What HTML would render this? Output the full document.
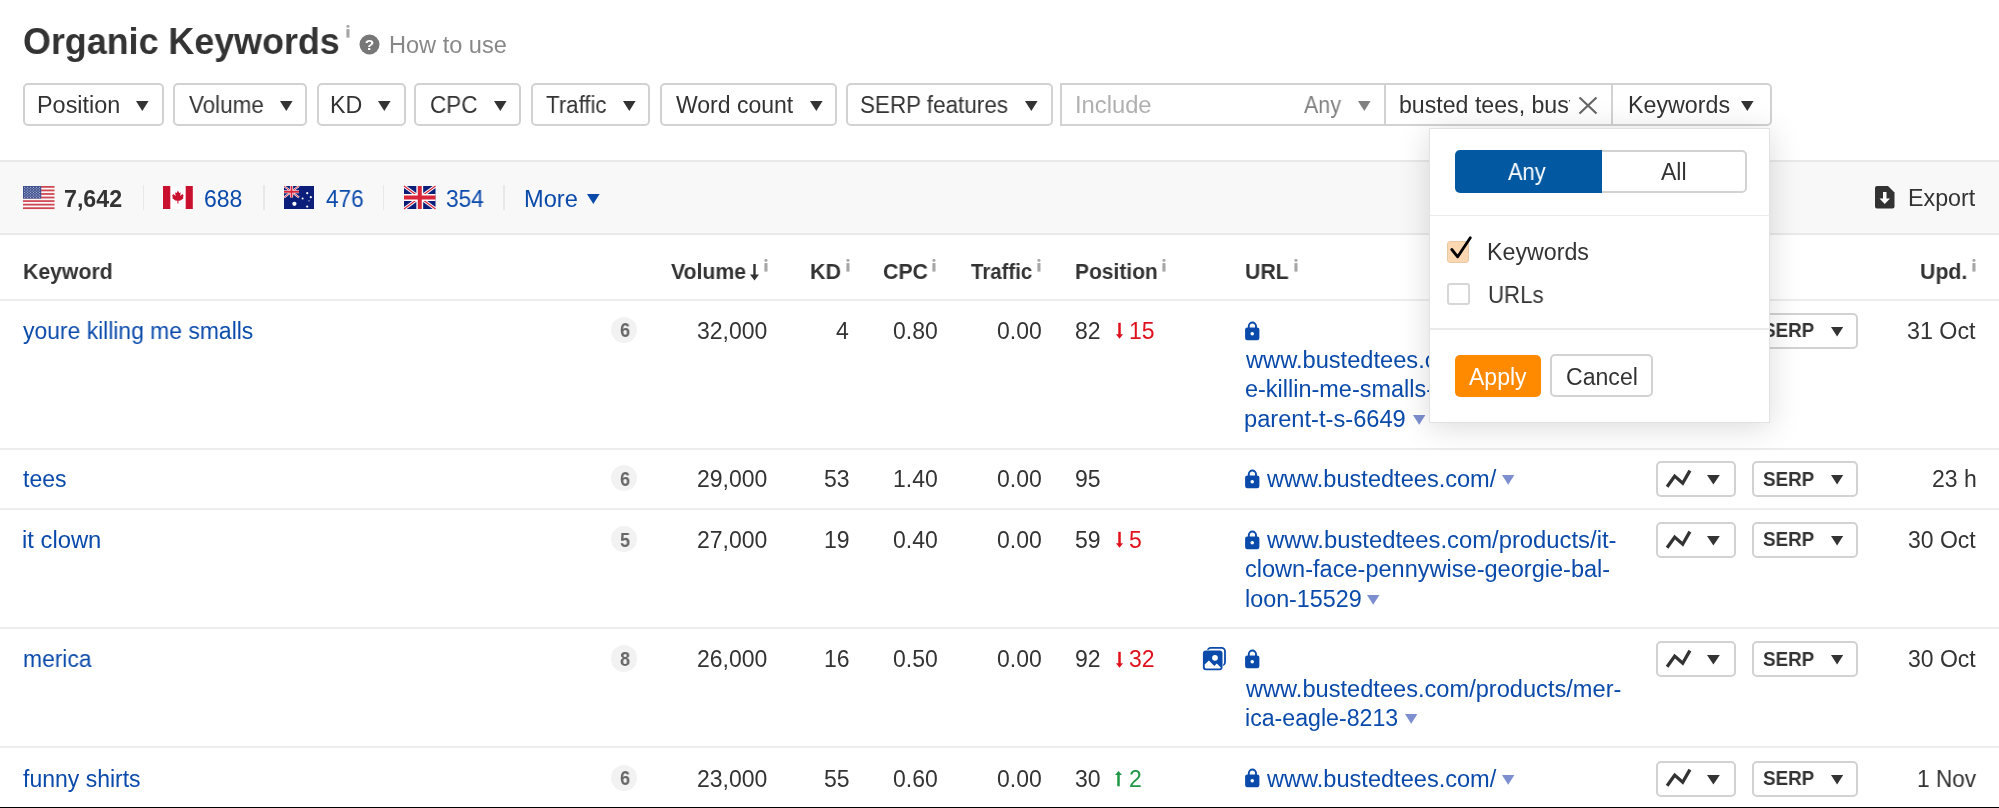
<!DOCTYPE html>
<html><head><meta charset="utf-8"><style>
html,body{margin:0;padding:0;background:#fff;width:1999px;height:808px;overflow:hidden;position:relative;}
.t{position:absolute;white-space:nowrap;font-family:'Liberation Sans', sans-serif;will-change:transform;}
svg{overflow:visible;will-change:transform}
</style></head><body>
<div class="t" style="top:24.29px;font-size:36.5px;line-height:36.5px;color:#333333;font-weight:700;left:23.02px;transform:scaleX(0.9819);transform-origin:0 0;">Organic Keywords</div>
<svg style="position:absolute;left:346.2px;top:24.6px" width="4" height="13" viewBox="0 0 4 13"><rect x="0.4" y="0" width="3.1" height="2.8" rx="1.3" fill="#a6a6a6"/><rect x="0.4" y="4.1" width="3.1" height="8.5" fill="#a6a6a6"/></svg>
<svg style="position:absolute;left:359px;top:33.6px" width="21" height="21" viewBox="0 0 21 21"><circle cx="10.5" cy="10.5" r="10" fill="#777"/><text x="10.5" y="15.6" text-anchor="middle" font-family="Liberation Sans" font-weight="700" font-size="15.5" fill="#fff">?</text></svg>
<div class="t" style="top:33.50px;font-size:23px;line-height:23px;color:#888888;left:388.95px;transform:scaleX(1.0241);transform-origin:0 0;">How to use</div>
<div style="position:absolute;left:23px;top:83px;width:141px;height:43px;box-sizing:border-box;border:2px solid #d2d2d2;border-radius:5px;background:#fff;"></div>
<div class="t" style="top:94.10px;font-size:23px;line-height:23px;color:#333333;left:36.56px;transform:scaleX(1.0177);transform-origin:0 0;">Position</div>
<svg style="position:absolute;left:135.9px;top:101px" width="12.6" height="10" viewBox="0 0 12.6 10"><path d="M0 0H12.6L6.3 10Z" fill="#333333"/></svg>
<div style="position:absolute;left:173px;top:83px;width:134px;height:43px;box-sizing:border-box;border:2px solid #d2d2d2;border-radius:5px;background:#fff;"></div>
<div class="t" style="top:94.10px;font-size:23px;line-height:23px;color:#333333;left:188.60px;transform:scaleX(0.9750);transform-origin:0 0;">Volume</div>
<svg style="position:absolute;left:279.9px;top:101px" width="12.6" height="10" viewBox="0 0 12.6 10"><path d="M0 0H12.6L6.3 10Z" fill="#333333"/></svg>
<div style="position:absolute;left:317px;top:83px;width:89px;height:43px;box-sizing:border-box;border:2px solid #d2d2d2;border-radius:5px;background:#fff;"></div>
<div class="t" style="top:94.10px;font-size:23px;line-height:23px;color:#333333;left:330.08px;transform:scaleX(1.0103);transform-origin:0 0;">KD</div>
<svg style="position:absolute;left:378px;top:101px" width="12.6" height="10" viewBox="0 0 12.6 10"><path d="M0 0H12.6L6.3 10Z" fill="#333333"/></svg>
<div style="position:absolute;left:414px;top:83px;width:107px;height:43px;box-sizing:border-box;border:2px solid #d2d2d2;border-radius:5px;background:#fff;"></div>
<div class="t" style="top:94.10px;font-size:23px;line-height:23px;color:#333333;left:429.52px;transform:scaleX(0.9787);transform-origin:0 0;">CPC</div>
<svg style="position:absolute;left:494px;top:101px" width="12.6" height="10" viewBox="0 0 12.6 10"><path d="M0 0H12.6L6.3 10Z" fill="#333333"/></svg>
<div style="position:absolute;left:531px;top:83px;width:119px;height:43px;box-sizing:border-box;border:2px solid #d2d2d2;border-radius:5px;background:#fff;"></div>
<div class="t" style="top:94.10px;font-size:23px;line-height:23px;color:#333333;left:546.10px;transform:scaleX(0.9677);transform-origin:0 0;">Traffic</div>
<svg style="position:absolute;left:623px;top:101px" width="12.6" height="10" viewBox="0 0 12.6 10"><path d="M0 0H12.6L6.3 10Z" fill="#333333"/></svg>
<div style="position:absolute;left:660px;top:83px;width:177px;height:43px;box-sizing:border-box;border:2px solid #d2d2d2;border-radius:5px;background:#fff;"></div>
<div class="t" style="top:94.10px;font-size:23px;line-height:23px;color:#333333;left:675.50px;">Word count</div>
<svg style="position:absolute;left:810px;top:101px" width="12.6" height="10" viewBox="0 0 12.6 10"><path d="M0 0H12.6L6.3 10Z" fill="#333333"/></svg>
<div style="position:absolute;left:846px;top:83px;width:207px;height:43px;box-sizing:border-box;border:2px solid #d2d2d2;border-radius:5px;background:#fff;"></div>
<div class="t" style="top:94.10px;font-size:23px;line-height:23px;color:#333333;left:860.22px;transform:scaleX(0.9753);transform-origin:0 0;">SERP features</div>
<svg style="position:absolute;left:1025px;top:101px" width="12.6" height="10" viewBox="0 0 12.6 10"><path d="M0 0H12.6L6.3 10Z" fill="#333333"/></svg>
<div style="position:absolute;left:1060px;top:83px;width:712px;height:43px;box-sizing:border-box;border:2px solid #d2d2d2;border-radius:5px;background:#fff;border-radius:0 5px 5px 0;"></div>
<div style="position:absolute;left:1384px;top:84px;width:2px;height:41px;background:#d2d2d2;"></div>
<div style="position:absolute;left:1611px;top:84px;width:2px;height:41px;background:#d2d2d2;"></div>
<div class="t" style="top:94.10px;font-size:23px;line-height:23px;color:#b0b0b0;left:1074.84px;transform:scaleX(1.0324);transform-origin:0 0;">Include</div>
<div class="t" style="top:94.10px;font-size:23px;line-height:23px;color:#808080;left:1303.80px;transform:scaleX(0.9325);transform-origin:0 0;">Any</div>
<svg style="position:absolute;left:1358.4px;top:101px" width="12.6" height="10" viewBox="0 0 12.6 10"><path d="M0 0H12.6L6.3 10Z" fill="#808080"/></svg>
<div style="position:absolute;left:1390px;top:90px;width:179.5px;height:32px;overflow:hidden;"><div class="t" style="left:8.6px;top:4.10px;font-size:23px;line-height:23px;color:#333333;transform:scaleX(1.006);transform-origin:0 0">busted tees, busted</div></div>
<svg style="position:absolute;left:1578px;top:96px" width="20" height="19" viewBox="0 0 20 19"><path d="M1.5 1.5L18.5 17.5M18.5 1.5L1.5 17.5" stroke="#666" stroke-width="2.2" fill="none"/></svg>
<div class="t" style="top:94.10px;font-size:23px;line-height:23px;color:#333333;left:1627.98px;transform:scaleX(1.0101);transform-origin:0 0;">Keywords</div>
<svg style="position:absolute;left:1741px;top:101px" width="12.6" height="10" viewBox="0 0 12.6 10"><path d="M0 0H12.6L6.3 10Z" fill="#333333"/></svg>
<div style="position:absolute;left:0px;top:160px;width:1999px;height:75px;background:#f8f8f8;"></div>
<div style="position:absolute;left:0px;top:160px;width:1999px;height:2px;background:#e9e9eb;"></div>
<div style="position:absolute;left:0px;top:233.4px;width:1999px;height:2.0px;background:#e9e9eb;"></div>
<svg style="position:absolute;left:22.6px;top:186.2px" width="32" height="23" viewBox="0 0 32 23"><rect x="0" y="0.00" width="31.5" height="1.75" fill="#d0454f"/><rect x="0" y="3.55" width="31.5" height="1.75" fill="#d0454f"/><rect x="0" y="7.10" width="31.5" height="1.75" fill="#d0454f"/><rect x="0" y="10.65" width="31.5" height="1.75" fill="#d0454f"/><rect x="0" y="14.20" width="31.5" height="1.75" fill="#d0454f"/><rect x="0" y="17.75" width="31.5" height="1.75" fill="#d0454f"/><rect x="0" y="21.30" width="31.5" height="1.75" fill="#d0454f"/><rect x="0" y="0" width="18.2" height="12.6" fill="#3d4f8c"/><circle cx="1.6" cy="1.4" r="0.6" fill="#a9b2d3"/><circle cx="4.6" cy="1.4" r="0.6" fill="#a9b2d3"/><circle cx="7.6" cy="1.4" r="0.6" fill="#a9b2d3"/><circle cx="10.6" cy="1.4" r="0.6" fill="#a9b2d3"/><circle cx="13.6" cy="1.4" r="0.6" fill="#a9b2d3"/><circle cx="16.6" cy="1.4" r="0.6" fill="#a9b2d3"/><circle cx="1.6" cy="3.9" r="0.6" fill="#a9b2d3"/><circle cx="4.6" cy="3.9" r="0.6" fill="#a9b2d3"/><circle cx="7.6" cy="3.9" r="0.6" fill="#a9b2d3"/><circle cx="10.6" cy="3.9" r="0.6" fill="#a9b2d3"/><circle cx="13.6" cy="3.9" r="0.6" fill="#a9b2d3"/><circle cx="16.6" cy="3.9" r="0.6" fill="#a9b2d3"/><circle cx="1.6" cy="6.4" r="0.6" fill="#a9b2d3"/><circle cx="4.6" cy="6.4" r="0.6" fill="#a9b2d3"/><circle cx="7.6" cy="6.4" r="0.6" fill="#a9b2d3"/><circle cx="10.6" cy="6.4" r="0.6" fill="#a9b2d3"/><circle cx="13.6" cy="6.4" r="0.6" fill="#a9b2d3"/><circle cx="16.6" cy="6.4" r="0.6" fill="#a9b2d3"/><circle cx="1.6" cy="8.9" r="0.6" fill="#a9b2d3"/><circle cx="4.6" cy="8.9" r="0.6" fill="#a9b2d3"/><circle cx="7.6" cy="8.9" r="0.6" fill="#a9b2d3"/><circle cx="10.6" cy="8.9" r="0.6" fill="#a9b2d3"/><circle cx="13.6" cy="8.9" r="0.6" fill="#a9b2d3"/><circle cx="16.6" cy="8.9" r="0.6" fill="#a9b2d3"/><circle cx="1.6" cy="11.4" r="0.6" fill="#a9b2d3"/><circle cx="4.6" cy="11.4" r="0.6" fill="#a9b2d3"/><circle cx="7.6" cy="11.4" r="0.6" fill="#a9b2d3"/><circle cx="10.6" cy="11.4" r="0.6" fill="#a9b2d3"/><circle cx="13.6" cy="11.4" r="0.6" fill="#a9b2d3"/><circle cx="16.6" cy="11.4" r="0.6" fill="#a9b2d3"/><circle cx="3.1" cy="2.6" r="0.6" fill="#a9b2d3"/><circle cx="6.1" cy="2.6" r="0.6" fill="#a9b2d3"/><circle cx="9.1" cy="2.6" r="0.6" fill="#a9b2d3"/><circle cx="12.1" cy="2.6" r="0.6" fill="#a9b2d3"/><circle cx="15.1" cy="2.6" r="0.6" fill="#a9b2d3"/><circle cx="3.1" cy="5.2" r="0.6" fill="#a9b2d3"/><circle cx="6.1" cy="5.2" r="0.6" fill="#a9b2d3"/><circle cx="9.1" cy="5.2" r="0.6" fill="#a9b2d3"/><circle cx="12.1" cy="5.2" r="0.6" fill="#a9b2d3"/><circle cx="15.1" cy="5.2" r="0.6" fill="#a9b2d3"/><circle cx="3.1" cy="7.7" r="0.6" fill="#a9b2d3"/><circle cx="6.1" cy="7.7" r="0.6" fill="#a9b2d3"/><circle cx="9.1" cy="7.7" r="0.6" fill="#a9b2d3"/><circle cx="12.1" cy="7.7" r="0.6" fill="#a9b2d3"/><circle cx="15.1" cy="7.7" r="0.6" fill="#a9b2d3"/><circle cx="3.1" cy="10.2" r="0.6" fill="#a9b2d3"/><circle cx="6.1" cy="10.2" r="0.6" fill="#a9b2d3"/><circle cx="9.1" cy="10.2" r="0.6" fill="#a9b2d3"/><circle cx="12.1" cy="10.2" r="0.6" fill="#a9b2d3"/><circle cx="15.1" cy="10.2" r="0.6" fill="#a9b2d3"/></svg>
<div class="t" style="top:187.50px;font-size:23px;line-height:23px;color:#333333;font-weight:700;left:64.39px;transform:scaleX(1.0089);transform-origin:0 0;">7,642</div>
<div style="position:absolute;left:142.75px;top:185px;width:1.5px;height:25px;background:#e9e9eb;"></div>
<svg style="position:absolute;left:163px;top:186.1px" width="30" height="23" viewBox="0 0 30 23"><rect width="29.8" height="23" fill="#fff"/><rect x="0" width="7.3" height="23" fill="#c9102f"/><rect x="22.7" width="7.1" height="23" fill="#c9102f"/><path d="M14.90 4.40L16.20 7.00L17.70 6.40L17.20 10.00L19.50 8.00L20.60 9.40L19.90 11.60L20.70 12.10L17.50 14.60L15.40 14.80L15.40 17.40L14.40 17.40L14.40 14.80L12.30 14.60L9.10 12.10L9.90 11.60L9.20 9.40L10.30 8.00L12.60 10.00L12.10 6.40L13.60 7.00Z" fill="#c9102f"/></svg>
<div class="t" style="top:187.50px;font-size:23px;line-height:23px;color:#0a4aab;left:204.31px;transform:scaleX(0.9892);transform-origin:0 0;">688</div>
<div style="position:absolute;left:263.15px;top:185px;width:1.5px;height:25px;background:#e9e9eb;"></div>
<svg style="position:absolute;left:284.2px;top:186.2px" width="30" height="23" viewBox="0 0 30 23"><rect width="30" height="23" fill="#0b1f7a"/><g><path d="M0 0L15 11.5M15 0L0 11.5" stroke="#fff" stroke-width="2.2"/><path d="M0 0L15 11.5M15 0L0 11.5" stroke="#d8253a" stroke-width="0.9"/><path d="M7.5 0V11.5M0 5.75H15" stroke="#fff" stroke-width="3.2"/><path d="M7.5 0V11.5M0 5.75H15" stroke="#d8253a" stroke-width="1.8"/></g><circle cx="10.4" cy="17.8" r="2.1" fill="#fff"/><circle cx="23.2" cy="7.2" r="1.1" fill="#fff"/><circle cx="26.8" cy="11.2" r="1.1" fill="#fff"/><circle cx="18.6" cy="12.4" r="1.0" fill="#fff"/><circle cx="23.2" cy="20.6" r="1.1" fill="#fff"/><circle cx="25" cy="14.8" r="0.6" fill="#fff"/></svg>
<div class="t" style="top:187.50px;font-size:23px;line-height:23px;color:#0a4aab;left:325.90px;transform:scaleX(0.9842);transform-origin:0 0;">476</div>
<div style="position:absolute;left:382.55px;top:185px;width:1.5px;height:25px;background:#e9e9eb;"></div>
<svg style="position:absolute;left:403.6px;top:186.2px" width="32" height="23" viewBox="0 0 32 23"><rect width="31.5" height="23" fill="#0b1f7a"/><path d="M0 0L31.5 23M31.5 0L0 23" stroke="#fff" stroke-width="3.4"/><path d="M0 0L31.5 23M31.5 0L0 23" stroke="#d8253a" stroke-width="1.2"/><path d="M15.75 0V23M0 11.5H31.5" stroke="#fff" stroke-width="6.8"/><path d="M15.75 0V23M0 11.5H31.5" stroke="#d8253a" stroke-width="4"/></svg>
<div class="t" style="top:187.50px;font-size:23px;line-height:23px;color:#0a4aab;left:446.11px;transform:scaleX(0.9865);transform-origin:0 0;">354</div>
<div style="position:absolute;left:503.15px;top:185px;width:1.5px;height:25px;background:#e9e9eb;"></div>
<div class="t" style="top:187.50px;font-size:23px;line-height:23px;color:#0a4aab;left:524.25px;transform:scaleX(1.0260);transform-origin:0 0;">More</div>
<svg style="position:absolute;left:586.8px;top:193.6px" width="12.6" height="10" viewBox="0 0 12.6 10"><path d="M0 0H12.6L6.3 10Z" fill="#0a4aab"/></svg>
<svg style="position:absolute;left:1875px;top:186.4px" width="20" height="23" viewBox="0 0 20 23"><path d="M2 0H13L19.5 6.5V20.5A2 2 0 0 1 17.5 22.5H2A2 2 0 0 1 0 20.5V2A2 2 0 0 1 2 0Z" fill="#333"/><path d="M8 6H11.5V12.5H15L9.75 18L4.5 12.5H8Z" fill="#fff"/></svg>
<div class="t" style="top:187.10px;font-size:23px;line-height:23px;color:#333333;left:1907.98px;transform:scaleX(1.0108);transform-origin:0 0;">Export</div>
<div class="t" style="top:261.33px;font-size:22px;line-height:22px;color:#333333;font-weight:700;left:22.84px;transform:scaleX(0.9648);transform-origin:0 0;">Keyword</div>
<div class="t" style="top:261.33px;font-size:22px;line-height:22px;color:#333333;font-weight:700;left:670.50px;transform:scaleX(0.9649);transform-origin:0 0;">Volume</div>
<svg style="position:absolute;left:750px;top:263.5px" width="9" height="17" viewBox="0 0 9 17"><path d="M4.5 0V12" stroke="#333" stroke-width="2.4"/><path d="M0 10.5H9L4.5 16.5Z" fill="#333"/></svg>
<svg style="position:absolute;left:764px;top:259.4px" width="4" height="13" viewBox="0 0 4 13"><rect x="0.4" y="0" width="3.1" height="2.8" rx="1.3" fill="#a6a6a6"/><rect x="0.4" y="4.1" width="3.1" height="8.5" fill="#a6a6a6"/></svg>
<div class="t" style="top:261.33px;font-size:22px;line-height:22px;color:#333333;font-weight:700;left:809.83px;transform:scaleX(0.9733);transform-origin:0 0;">KD</div>
<svg style="position:absolute;left:845.9px;top:259.4px" width="4" height="13" viewBox="0 0 4 13"><rect x="0.4" y="0" width="3.1" height="2.8" rx="1.3" fill="#a6a6a6"/><rect x="0.4" y="4.1" width="3.1" height="8.5" fill="#a6a6a6"/></svg>
<div class="t" style="top:261.33px;font-size:22px;line-height:22px;color:#333333;font-weight:700;left:882.63px;transform:scaleX(0.9667);transform-origin:0 0;">CPC</div>
<svg style="position:absolute;left:932px;top:259.4px" width="4" height="13" viewBox="0 0 4 13"><rect x="0.4" y="0" width="3.1" height="2.8" rx="1.3" fill="#a6a6a6"/><rect x="0.4" y="4.1" width="3.1" height="8.5" fill="#a6a6a6"/></svg>
<div class="t" style="top:261.33px;font-size:22px;line-height:22px;color:#333333;font-weight:700;left:970.90px;transform:scaleX(0.9273);transform-origin:0 0;">Traffic</div>
<svg style="position:absolute;left:1037.1px;top:259.4px" width="4" height="13" viewBox="0 0 4 13"><rect x="0.4" y="0" width="3.1" height="2.8" rx="1.3" fill="#a6a6a6"/><rect x="0.4" y="4.1" width="3.1" height="8.5" fill="#a6a6a6"/></svg>
<div class="t" style="top:261.33px;font-size:22px;line-height:22px;color:#333333;font-weight:700;left:1074.95px;transform:scaleX(0.9541);transform-origin:0 0;">Position</div>
<svg style="position:absolute;left:1161.5px;top:259.4px" width="4" height="13" viewBox="0 0 4 13"><rect x="0.4" y="0" width="3.1" height="2.8" rx="1.3" fill="#a6a6a6"/><rect x="0.4" y="4.1" width="3.1" height="8.5" fill="#a6a6a6"/></svg>
<div class="t" style="top:261.33px;font-size:22px;line-height:22px;color:#333333;font-weight:700;left:1244.83px;transform:scaleX(0.9659);transform-origin:0 0;">URL</div>
<svg style="position:absolute;left:1293.7px;top:259.4px" width="4" height="13" viewBox="0 0 4 13"><rect x="0.4" y="0" width="3.1" height="2.8" rx="1.3" fill="#a6a6a6"/><rect x="0.4" y="4.1" width="3.1" height="8.5" fill="#a6a6a6"/></svg>
<div class="t" style="top:261.33px;font-size:22px;line-height:22px;color:#333333;font-weight:700;left:1919.53px;transform:scaleX(0.9681);transform-origin:0 0;">Upd.</div>
<svg style="position:absolute;left:1972px;top:259.4px" width="4" height="13" viewBox="0 0 4 13"><rect x="0.4" y="0" width="3.1" height="2.8" rx="1.3" fill="#a6a6a6"/><rect x="0.4" y="4.1" width="3.1" height="8.5" fill="#a6a6a6"/></svg>
<div style="position:absolute;left:0px;top:298.9px;width:1999px;height:2.0px;background:#ececee;"></div>
<div style="position:absolute;left:0px;top:447.5px;width:1999px;height:2.0px;background:#ececee;"></div>
<div style="position:absolute;left:0px;top:508.2px;width:1999px;height:2.0px;background:#ececee;"></div>
<div style="position:absolute;left:0px;top:627.4px;width:1999px;height:2.0px;background:#ececee;"></div>
<div style="position:absolute;left:0px;top:746.4px;width:1999px;height:2.0px;background:#ececee;"></div>
<div class="t" style="top:319.80px;font-size:23px;line-height:23px;color:#0a4aab;left:23.10px;transform:scaleX(0.9952);transform-origin:0 0;">youre killing me smalls</div>
<div style="position:absolute;left:611.2px;top:316.9px;width:26.299999999999955px;height:26.30000000000001px;border-radius:50%;background:#f2f2f2;"></div>
<div class="t" style="top:321.41px;font-size:19.5px;line-height:19.5px;color:#666;font-weight:700;left:619.50px;transform:scaleX(0.9273);transform-origin:0 0;">6</div>
<div class="t" style="top:319.80px;font-size:23px;line-height:23px;color:#333333;left:697.20px;">32,000</div>
<div class="t" style="top:319.80px;font-size:23px;line-height:23px;color:#333333;left:835.80px;">4</div>
<div class="t" style="top:319.80px;font-size:23px;line-height:23px;color:#333333;left:892.60px;">0.80</div>
<div class="t" style="top:319.80px;font-size:23px;line-height:23px;color:#333333;left:997.00px;">0.00</div>
<div class="t" style="top:319.80px;font-size:23px;line-height:23px;color:#333333;left:1075.10px;">82</div>
<svg style="position:absolute;left:1115.8px;top:322.3px" width="7" height="17" viewBox="0 0 7 17"><path d="M3.5 0.8V13" stroke="#e0101c" stroke-width="2.5"/><path d="M0 12.2H7L3.5 16.8Z" fill="#e0101c"/></svg>
<div class="t" style="top:319.80px;font-size:23px;line-height:23px;color:#e0101c;left:1128.80px;">15</div>
<div class="t" style="top:319.80px;font-size:23px;line-height:23px;color:#333333;left:1906.99px;transform:scaleX(1.0119);transform-origin:0 0;">31 Oct</div>
<div style="position:absolute;left:1656px;top:313px;width:80px;height:36px;box-sizing:border-box;border:2px solid #d2d2d2;border-radius:5px;background:#fff;"></div>
<svg style="position:absolute;left:1665px;top:320.5px" width="28" height="20" viewBox="0 0 28 20"><path d="M2.1 17.8L9.7 7.1L17.7 14.2L24.9 1.6" stroke="#333" stroke-width="3.3" fill="none" stroke-linejoin="miter"/></svg>
<svg style="position:absolute;left:1706.5px;top:326.7px" width="12.8" height="9.6" viewBox="0 0 12.8 9.6"><path d="M0 0H12.8L6.4 9.6Z" fill="#333333"/></svg>
<div style="position:absolute;left:1752px;top:313px;width:106px;height:36px;box-sizing:border-box;border:2px solid #d2d2d2;border-radius:5px;background:#fff;"></div>
<div class="t" style="top:321.31px;font-size:19.5px;line-height:19.5px;color:#333333;font-weight:700;left:1762.60px;transform:scaleX(0.9660);transform-origin:0 0;">SERP</div>
<svg style="position:absolute;left:1831.3px;top:326.7px" width="12.2" height="9.6" viewBox="0 0 12.2 9.6"><path d="M0 0H12.2L6.1 9.6Z" fill="#333333"/></svg>
<div class="t" style="top:468.10px;font-size:23px;line-height:23px;color:#0a4aab;left:23.00px;transform:scaleX(0.9930);transform-origin:0 0;">tees</div>
<div style="position:absolute;left:611.2px;top:465.2px;width:26.299999999999955px;height:26.30000000000001px;border-radius:50%;background:#f2f2f2;"></div>
<div class="t" style="top:469.71px;font-size:19.5px;line-height:19.5px;color:#666;font-weight:700;left:619.50px;transform:scaleX(0.9273);transform-origin:0 0;">6</div>
<div class="t" style="top:468.10px;font-size:23px;line-height:23px;color:#333333;left:697.20px;">29,000</div>
<div class="t" style="top:468.10px;font-size:23px;line-height:23px;color:#333333;left:823.80px;">53</div>
<div class="t" style="top:468.10px;font-size:23px;line-height:23px;color:#333333;left:892.60px;">1.40</div>
<div class="t" style="top:468.10px;font-size:23px;line-height:23px;color:#333333;left:997.00px;">0.00</div>
<div class="t" style="top:468.10px;font-size:23px;line-height:23px;color:#333333;left:1075.10px;">95</div>
<div class="t" style="top:468.10px;font-size:23px;line-height:23px;color:#333333;left:1932.00px;">23 h</div>
<div style="position:absolute;left:1656px;top:461px;width:80px;height:36px;box-sizing:border-box;border:2px solid #d2d2d2;border-radius:5px;background:#fff;"></div>
<svg style="position:absolute;left:1665px;top:468.8px" width="28" height="20" viewBox="0 0 28 20"><path d="M2.1 17.8L9.7 7.1L17.7 14.2L24.9 1.6" stroke="#333" stroke-width="3.3" fill="none" stroke-linejoin="miter"/></svg>
<svg style="position:absolute;left:1706.5px;top:475.0px" width="12.8" height="9.6" viewBox="0 0 12.8 9.6"><path d="M0 0H12.8L6.4 9.6Z" fill="#333333"/></svg>
<div style="position:absolute;left:1752px;top:461px;width:106px;height:36px;box-sizing:border-box;border:2px solid #d2d2d2;border-radius:5px;background:#fff;"></div>
<div class="t" style="top:469.61px;font-size:19.5px;line-height:19.5px;color:#333333;font-weight:700;left:1762.60px;transform:scaleX(0.9660);transform-origin:0 0;">SERP</div>
<svg style="position:absolute;left:1831.3px;top:475.0px" width="12.2" height="9.6" viewBox="0 0 12.2 9.6"><path d="M0 0H12.2L6.1 9.6Z" fill="#333333"/></svg>
<div class="t" style="top:528.90px;font-size:23px;line-height:23px;color:#0a4aab;left:22.37px;transform:scaleX(1.0347);transform-origin:0 0;">it clown</div>
<div style="position:absolute;left:611.2px;top:526.0px;width:26.299999999999955px;height:26.300000000000068px;border-radius:50%;background:#f2f2f2;"></div>
<div class="t" style="top:530.51px;font-size:19.5px;line-height:19.5px;color:#666;font-weight:700;left:619.50px;transform:scaleX(0.9273);transform-origin:0 0;">5</div>
<div class="t" style="top:528.90px;font-size:23px;line-height:23px;color:#333333;left:697.20px;">27,000</div>
<div class="t" style="top:528.90px;font-size:23px;line-height:23px;color:#333333;left:823.80px;">19</div>
<div class="t" style="top:528.90px;font-size:23px;line-height:23px;color:#333333;left:892.60px;">0.40</div>
<div class="t" style="top:528.90px;font-size:23px;line-height:23px;color:#333333;left:997.00px;">0.00</div>
<div class="t" style="top:528.90px;font-size:23px;line-height:23px;color:#333333;left:1075.10px;">59</div>
<svg style="position:absolute;left:1115.8px;top:531.4px" width="7" height="17" viewBox="0 0 7 17"><path d="M3.5 0.8V13" stroke="#e0101c" stroke-width="2.5"/><path d="M0 12.2H7L3.5 16.8Z" fill="#e0101c"/></svg>
<div class="t" style="top:528.90px;font-size:23px;line-height:23px;color:#e0101c;left:1128.80px;">5</div>
<div class="t" style="top:528.90px;font-size:23px;line-height:23px;color:#333333;left:1908.00px;">30 Oct</div>
<div style="position:absolute;left:1656px;top:522px;width:80px;height:36px;box-sizing:border-box;border:2px solid #d2d2d2;border-radius:5px;background:#fff;"></div>
<svg style="position:absolute;left:1665px;top:529.6px" width="28" height="20" viewBox="0 0 28 20"><path d="M2.1 17.8L9.7 7.1L17.7 14.2L24.9 1.6" stroke="#333" stroke-width="3.3" fill="none" stroke-linejoin="miter"/></svg>
<svg style="position:absolute;left:1706.5px;top:535.8000000000001px" width="12.8" height="9.6" viewBox="0 0 12.8 9.6"><path d="M0 0H12.8L6.4 9.6Z" fill="#333333"/></svg>
<div style="position:absolute;left:1752px;top:522px;width:106px;height:36px;box-sizing:border-box;border:2px solid #d2d2d2;border-radius:5px;background:#fff;"></div>
<div class="t" style="top:530.41px;font-size:19.5px;line-height:19.5px;color:#333333;font-weight:700;left:1762.60px;transform:scaleX(0.9660);transform-origin:0 0;">SERP</div>
<svg style="position:absolute;left:1831.3px;top:535.8000000000001px" width="12.2" height="9.6" viewBox="0 0 12.2 9.6"><path d="M0 0H12.2L6.1 9.6Z" fill="#333333"/></svg>
<div class="t" style="top:648.20px;font-size:23px;line-height:23px;color:#0a4aab;left:23.01px;transform:scaleX(0.9926);transform-origin:0 0;">merica</div>
<div style="position:absolute;left:611.2px;top:645.3000000000001px;width:26.299999999999955px;height:26.300000000000068px;border-radius:50%;background:#f2f2f2;"></div>
<div class="t" style="top:649.81px;font-size:19.5px;line-height:19.5px;color:#666;font-weight:700;left:619.50px;transform:scaleX(0.9273);transform-origin:0 0;">8</div>
<div class="t" style="top:648.20px;font-size:23px;line-height:23px;color:#333333;left:697.20px;">26,000</div>
<div class="t" style="top:648.20px;font-size:23px;line-height:23px;color:#333333;left:823.80px;">16</div>
<div class="t" style="top:648.20px;font-size:23px;line-height:23px;color:#333333;left:892.60px;">0.50</div>
<div class="t" style="top:648.20px;font-size:23px;line-height:23px;color:#333333;left:997.00px;">0.00</div>
<div class="t" style="top:648.20px;font-size:23px;line-height:23px;color:#333333;left:1075.10px;">92</div>
<svg style="position:absolute;left:1115.8px;top:650.7px" width="7" height="17" viewBox="0 0 7 17"><path d="M3.5 0.8V13" stroke="#e0101c" stroke-width="2.5"/><path d="M0 12.2H7L3.5 16.8Z" fill="#e0101c"/></svg>
<div class="t" style="top:648.20px;font-size:23px;line-height:23px;color:#e0101c;left:1128.80px;">32</div>
<div class="t" style="top:648.20px;font-size:23px;line-height:23px;color:#333333;left:1908.00px;">30 Oct</div>
<div style="position:absolute;left:1656px;top:641px;width:80px;height:36px;box-sizing:border-box;border:2px solid #d2d2d2;border-radius:5px;background:#fff;"></div>
<svg style="position:absolute;left:1665px;top:648.9000000000001px" width="28" height="20" viewBox="0 0 28 20"><path d="M2.1 17.8L9.7 7.1L17.7 14.2L24.9 1.6" stroke="#333" stroke-width="3.3" fill="none" stroke-linejoin="miter"/></svg>
<svg style="position:absolute;left:1706.5px;top:655.1000000000001px" width="12.8" height="9.6" viewBox="0 0 12.8 9.6"><path d="M0 0H12.8L6.4 9.6Z" fill="#333333"/></svg>
<div style="position:absolute;left:1752px;top:641px;width:106px;height:36px;box-sizing:border-box;border:2px solid #d2d2d2;border-radius:5px;background:#fff;"></div>
<div class="t" style="top:649.71px;font-size:19.5px;line-height:19.5px;color:#333333;font-weight:700;left:1762.60px;transform:scaleX(0.9660);transform-origin:0 0;">SERP</div>
<svg style="position:absolute;left:1831.3px;top:655.1000000000001px" width="12.2" height="9.6" viewBox="0 0 12.2 9.6"><path d="M0 0H12.2L6.1 9.6Z" fill="#333333"/></svg>
<div class="t" style="top:767.70px;font-size:23px;line-height:23px;color:#0a4aab;left:23.30px;">funny shirts</div>
<div style="position:absolute;left:611.2px;top:764.8000000000001px;width:26.299999999999955px;height:26.300000000000068px;border-radius:50%;background:#f2f2f2;"></div>
<div class="t" style="top:769.31px;font-size:19.5px;line-height:19.5px;color:#666;font-weight:700;left:619.50px;transform:scaleX(0.9273);transform-origin:0 0;">6</div>
<div class="t" style="top:767.70px;font-size:23px;line-height:23px;color:#333333;left:697.20px;">23,000</div>
<div class="t" style="top:767.70px;font-size:23px;line-height:23px;color:#333333;left:823.80px;">55</div>
<div class="t" style="top:767.70px;font-size:23px;line-height:23px;color:#333333;left:892.60px;">0.60</div>
<div class="t" style="top:767.70px;font-size:23px;line-height:23px;color:#333333;left:997.00px;">0.00</div>
<div class="t" style="top:767.70px;font-size:23px;line-height:23px;color:#333333;left:1075.10px;">30</div>
<svg style="position:absolute;left:1115.2px;top:770.2px" width="7" height="17" viewBox="0 0 7 17"><path d="M3.5 4.5V16.3" stroke="#1f9747" stroke-width="2.5"/><path d="M0 5H7L3.5 1Z" fill="#1f9747"/></svg>
<div class="t" style="top:767.70px;font-size:23px;line-height:23px;color:#1f9747;left:1128.80px;">2</div>
<div class="t" style="top:767.70px;font-size:23px;line-height:23px;color:#333333;left:1916.52px;transform:scaleX(0.9847);transform-origin:0 0;">1 Nov</div>
<div style="position:absolute;left:1656px;top:761px;width:80px;height:36px;box-sizing:border-box;border:2px solid #d2d2d2;border-radius:5px;background:#fff;"></div>
<svg style="position:absolute;left:1665px;top:768.4000000000001px" width="28" height="20" viewBox="0 0 28 20"><path d="M2.1 17.8L9.7 7.1L17.7 14.2L24.9 1.6" stroke="#333" stroke-width="3.3" fill="none" stroke-linejoin="miter"/></svg>
<svg style="position:absolute;left:1706.5px;top:774.6000000000001px" width="12.8" height="9.6" viewBox="0 0 12.8 9.6"><path d="M0 0H12.8L6.4 9.6Z" fill="#333333"/></svg>
<div style="position:absolute;left:1752px;top:761px;width:106px;height:36px;box-sizing:border-box;border:2px solid #d2d2d2;border-radius:5px;background:#fff;"></div>
<div class="t" style="top:769.21px;font-size:19.5px;line-height:19.5px;color:#333333;font-weight:700;left:1762.60px;transform:scaleX(0.9660);transform-origin:0 0;">SERP</div>
<svg style="position:absolute;left:1831.3px;top:774.6000000000001px" width="12.2" height="9.6" viewBox="0 0 12.2 9.6"><path d="M0 0H12.2L6.1 9.6Z" fill="#333333"/></svg>
<svg style="position:absolute;left:1245.1px;top:320.5px" width="15" height="20" viewBox="0 0 15 20"><path d="M3.8 7.2V5.1A3.6 3.6 0 0 1 11 5.1V7.2" stroke="#0a4aab" stroke-width="1.9" fill="none"/><rect x="0.1" y="6.6" width="14.3" height="12.6" rx="2.2" fill="#0a4aab"/><circle cx="7.25" cy="12.7" r="1.8" fill="#fff"/></svg>
<div class="t" style="top:349.10px;font-size:23px;line-height:23px;color:#0a4aab;left:1245.60px;transform:scaleX(1.0280);transform-origin:0 0;">www.bustedtees.com/products/your-</div>
<div class="t" style="top:378.40px;font-size:23px;line-height:23px;color:#0a4aab;left:1244.58px;transform:scaleX(1.0200);transform-origin:0 0;">e-killin-me-smalls-parent-</div>
<div class="t" style="top:407.70px;font-size:23px;line-height:23px;color:#0a4aab;left:1244.47px;transform:scaleX(1.0288);transform-origin:0 0;">parent-t-s-6649</div>
<svg style="position:absolute;left:1412.6px;top:414.70000000000005px" width="12.4" height="9.8" viewBox="0 0 12.4 9.8"><path d="M0 0H12.4L6.2 9.8Z" fill="#7d8fcf"/></svg>
<svg style="position:absolute;left:1245.1px;top:468.8px" width="15" height="20" viewBox="0 0 15 20"><path d="M3.8 7.2V5.1A3.6 3.6 0 0 1 11 5.1V7.2" stroke="#0a4aab" stroke-width="1.9" fill="none"/><rect x="0.1" y="6.6" width="14.3" height="12.6" rx="2.2" fill="#0a4aab"/><circle cx="7.25" cy="12.7" r="1.8" fill="#fff"/></svg>
<div class="t" style="top:468.10px;font-size:23px;line-height:23px;color:#0a4aab;left:1267.30px;transform:scaleX(1.0250);transform-origin:0 0;">www.bustedtees.com/</div>
<svg style="position:absolute;left:1502.4px;top:475.1px" width="12.4" height="9.8" viewBox="0 0 12.4 9.8"><path d="M0 0H12.4L6.2 9.8Z" fill="#7d8fcf"/></svg>
<svg style="position:absolute;left:1245.1px;top:529.6px" width="15" height="20" viewBox="0 0 15 20"><path d="M3.8 7.2V5.1A3.6 3.6 0 0 1 11 5.1V7.2" stroke="#0a4aab" stroke-width="1.9" fill="none"/><rect x="0.1" y="6.6" width="14.3" height="12.6" rx="2.2" fill="#0a4aab"/><circle cx="7.25" cy="12.7" r="1.8" fill="#fff"/></svg>
<div class="t" style="top:528.90px;font-size:23px;line-height:23px;color:#0a4aab;left:1266.60px;transform:scaleX(1.0356);transform-origin:0 0;">www.bustedtees.com/products/it-</div>
<div class="t" style="top:558.20px;font-size:23px;line-height:23px;color:#0a4aab;left:1244.68px;transform:scaleX(1.0239);transform-origin:0 0;">clown-face-pennywise-georgie-bal-</div>
<div class="t" style="top:587.50px;font-size:23px;line-height:23px;color:#0a4aab;left:1244.69px;transform:scaleX(1.0142);transform-origin:0 0;">loon-15529</div>
<svg style="position:absolute;left:1367.3px;top:594.5px" width="12.4" height="9.8" viewBox="0 0 12.4 9.8"><path d="M0 0H12.4L6.2 9.8Z" fill="#7d8fcf"/></svg>
<svg style="position:absolute;left:1202px;top:646px" width="26" height="26" viewBox="0 0 26 26"><rect x="5.5" y="1.8" width="17.5" height="17.5" rx="3.4" stroke="#0a4aab" stroke-width="1.8" fill="none"/><rect x="0.2" y="3.7" width="21" height="21.2" rx="3.6" fill="#fff"/><rect x="0.9" y="4.4" width="19.6" height="19.8" rx="3" fill="#0a4aab"/><circle cx="13" cy="11.8" r="2.9" fill="#fff"/><path d="M2.7 18.6L6.9 14.6L12.3 20L14.8 17.6L18.8 21.4Q18.8 22.4 17.6 22.4H4Q2.7 22.4 2.7 21Z" fill="#fff"/></svg>
<svg style="position:absolute;left:1245.1px;top:648.9000000000001px" width="15" height="20" viewBox="0 0 15 20"><path d="M3.8 7.2V5.1A3.6 3.6 0 0 1 11 5.1V7.2" stroke="#0a4aab" stroke-width="1.9" fill="none"/><rect x="0.1" y="6.6" width="14.3" height="12.6" rx="2.2" fill="#0a4aab"/><circle cx="7.25" cy="12.7" r="1.8" fill="#fff"/></svg>
<div class="t" style="top:677.50px;font-size:23px;line-height:23px;color:#0a4aab;left:1246.10px;transform:scaleX(1.0268);transform-origin:0 0;">www.bustedtees.com/products/mer-</div>
<div class="t" style="top:706.80px;font-size:23px;line-height:23px;color:#0a4aab;left:1244.99px;transform:scaleX(1.0067);transform-origin:0 0;">ica-eagle-8213</div>
<svg style="position:absolute;left:1404.8px;top:713.8000000000001px" width="12.4" height="9.8" viewBox="0 0 12.4 9.8"><path d="M0 0H12.4L6.2 9.8Z" fill="#7d8fcf"/></svg>
<svg style="position:absolute;left:1245.1px;top:768.4000000000001px" width="15" height="20" viewBox="0 0 15 20"><path d="M3.8 7.2V5.1A3.6 3.6 0 0 1 11 5.1V7.2" stroke="#0a4aab" stroke-width="1.9" fill="none"/><rect x="0.1" y="6.6" width="14.3" height="12.6" rx="2.2" fill="#0a4aab"/><circle cx="7.25" cy="12.7" r="1.8" fill="#fff"/></svg>
<div class="t" style="top:767.70px;font-size:23px;line-height:23px;color:#0a4aab;left:1267.30px;transform:scaleX(1.0250);transform-origin:0 0;">www.bustedtees.com/</div>
<svg style="position:absolute;left:1502.4px;top:774.7px" width="12.4" height="9.8" viewBox="0 0 12.4 9.8"><path d="M0 0H12.4L6.2 9.8Z" fill="#7d8fcf"/></svg>
<div style="position:absolute;left:1429px;top:128px;width:341px;height:294.5px;box-sizing:border-box;background:#fff;border:1px solid #e2e2e2;box-shadow:0 4px 30px rgba(0,0,0,0.15);"></div>
<div style="position:absolute;left:1589px;top:150px;width:158px;height:43px;box-sizing:border-box;border:2px solid #d2d2d2;border-radius:5px;background:#fff;border-radius:0 5px 5px 0;"></div>
<div style="position:absolute;left:1454.5px;top:150px;width:147.5px;height:42.5px;background:#0259a2;border-radius:5px 0 0 5px;"></div>
<div class="t" style="top:160.90px;font-size:23px;line-height:23px;color:#fff;left:1508.00px;transform:scaleX(0.9475);transform-origin:0 0;">Any</div>
<div class="t" style="top:160.90px;font-size:23px;line-height:23px;color:#333333;left:1660.90px;transform:scaleX(0.9833);transform-origin:0 0;">All</div>
<div style="position:absolute;left:1429.5px;top:214.5px;width:340.0px;height:1.5px;background:#ebebeb;"></div>
<div style="position:absolute;left:1447px;top:240.5px;width:22.299999999999955px;height:22.30000000000001px;box-sizing:border-box;border:1px solid #e9c9a4;border-radius:3px;background:#fbd8b2;"></div>
<svg style="position:absolute;left:1449px;top:236px" width="24" height="24" viewBox="0 0 24 24"><path d="M2.8 13.5L8.7 20.8L21.3 1.8" stroke="#000" stroke-width="2.8" fill="none" stroke-linecap="round" stroke-linejoin="round"/></svg>
<div class="t" style="top:241.30px;font-size:23px;line-height:23px;color:#333333;left:1487.38px;transform:scaleX(1.0091);transform-origin:0 0;">Keywords</div>
<div style="position:absolute;left:1447px;top:283px;width:23px;height:22px;box-sizing:border-box;border:2px solid #d6d6d6;border-radius:5px;background:#fff;border-radius:3px;"></div>
<div class="t" style="top:283.90px;font-size:23px;line-height:23px;color:#333333;left:1488.43px;transform:scaleX(0.9679);transform-origin:0 0;">URLs</div>
<div style="position:absolute;left:1429.5px;top:328.3px;width:340.0px;height:1.5px;background:#ebebeb;"></div>
<div style="position:absolute;left:1454.7px;top:354.7px;width:86.29999999999995px;height:42.0px;background:#ff8a00;border-radius:5px;"></div>
<div class="t" style="top:365.50px;font-size:23px;line-height:23px;color:#fff;left:1469.00px;">Apply</div>
<div style="position:absolute;left:1550px;top:354px;width:103px;height:43px;box-sizing:border-box;border:2px solid #d2d2d2;border-radius:5px;background:#fff;"></div>
<div class="t" style="top:365.50px;font-size:23px;line-height:23px;color:#333333;left:1566.20px;transform:scaleX(1.0043);transform-origin:0 0;">Cancel</div>
<div style="position:absolute;left:0px;top:807px;width:1999px;height:1px;background:#000;"></div>
</body></html>
